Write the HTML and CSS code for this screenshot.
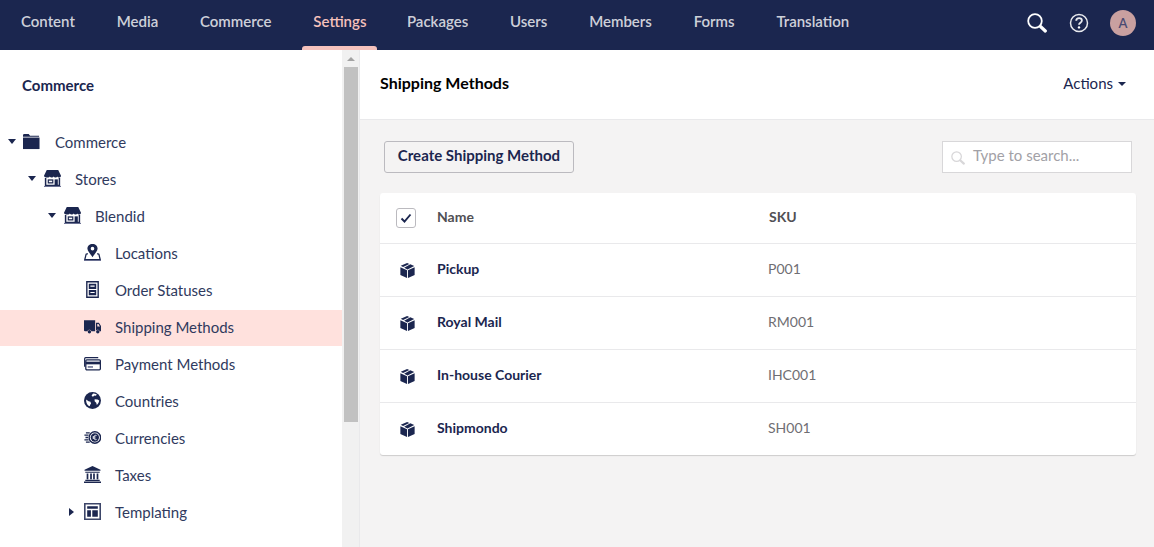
FILE: index.html
```html
<!DOCTYPE html>
<html lang="en">
<head>
<meta charset="utf-8">
<title>Shipping Methods</title>
<link rel="stylesheet" href="styles.css">
</head>
<body>
<svg class="defs" width="0" height="0" aria-hidden="true">
  <symbol id="store" viewBox="0 0 16 16">
    <path fill="#1b264f" d="M2.600 0h10.800L16 5.400c0 1-.8 1.700-1.700 1.700-.8 0-1.500-.4-1.800-1-.3.6-1 1-1.700 1-.8 0-1.500-.4-1.900-1-.2.6-.9 1-1.700 1s-1.400-.4-1.800-1c-.3.6-1 1-1.800 1C.9 7.100 0 6.400 0 5.400z"/>
    <path fill="none" stroke="#1b264f" stroke-width="1.400" d="M1.500 7.500v7h13v-7"/>
    <path fill="#1b264f" d="M3.500 8.800h5.300v3.900H3.500z"/>
    <path fill="#fff" d="M4.600 10h3.100v1.500H4.600z"/>
    <path fill="#1b264f" d="M10 8.800h3v5.700h-3z"/>
    <path fill="#6a7092" d="M0 15h16v1H0z"/>
  </symbol>
  <symbol id="box" viewBox="0 0 16 16">
    <path fill="#1b264f" d="M.4 4.600 7.500 7.800V16L.4 12.800z"/>
    <path fill="#1b264f" d="M15.600 4.600 8.500 7.800V16l7.100-3.200z"/>
    <path fill="#1b264f" d="M7.600 0 9.900 1 3.300 4.200.8 3z"/>
    <path fill="#1b264f" d="M11 1.300 15.200 3.200 8 6.900 4.400 5z"/>
  </symbol>
  <symbol id="lens" viewBox="0 0 20 20">
    <circle cx="8" cy="8" r="6.800" fill="none" stroke="currentColor" stroke-width="1.800"/>
    <path d="M13.500 13.500l4.800 4.500" stroke="currentColor" stroke-width="3.200" stroke-linecap="round"/>
  </symbol>
</svg>

<header class="topbar">
  <nav class="sections">
    <a class="section">Content</a>
    <a class="section">Media</a>
    <a class="section">Commerce</a>
    <a class="section is-active">Settings</a>
    <a class="section">Packages</a>
    <a class="section">Users</a>
    <a class="section">Members</a>
    <a class="section">Forms</a>
    <a class="section">Translation</a>
  </nav>
  <div class="tools">
    <svg class="tool-search"><use href="#lens"/></svg>
    <svg class="tool-help" viewBox="0 0 20 20">
      <circle cx="10" cy="10" r="8.500" fill="none" stroke="#fff" stroke-opacity=".9" stroke-width="1.500"/>
      <path d="M7.200 7.800c0-1.700 1.200-2.700 2.900-2.700 1.600 0 2.800 1 2.800 2.400 0 2.200-2.900 2.100-2.900 4.200" fill="none" stroke="#fff" stroke-opacity=".9" stroke-width="1.800"/>
      <circle cx="10" cy="14.400" r="1.200" fill="#fff"/>
    </svg>
    <div class="avatar">A</div>
  </div>
</header>

<div class="workspace">
  <aside class="sidebar">
    <div class="tree-pane">
      <h2 class="tree-title">Commerce</h2>
      <ul class="tree">
        <li class="node level-0">
          <span class="caret caret-down"></span>
          <svg class="node-icon" viewBox="0 0 18 16"><path fill="#1b264f" d="M0 1.500C0 .7.500 0 1.200 0H6l1.500 1.800H17V3H0z"/><path fill="#1b264f" d="M0 3.800h17.500V16H0z"/></svg>
          <span class="node-label">Commerce</span>
        </li>
        <li class="node level-1">
          <span class="caret caret-down"></span>
          <svg class="node-icon"><use href="#store"/></svg>
          <span class="node-label">Stores</span>
        </li>
        <li class="node level-2">
          <span class="caret caret-down"></span>
          <svg class="node-icon"><use href="#store"/></svg>
          <span class="node-label">Blendid</span>
        </li>
        <li class="node level-3">
          <span class="caret"></span>
          <svg class="node-icon" viewBox="0 0 16 16"><path fill="#1b264f" fill-rule="evenodd" d="M8 0c2.800 0 4.800 1.900 4.800 4.300 0 2.500-3 5.300-4.800 8.100-1.800-2.800-4.800-5.600-4.800-8.100C3.200 1.900 5.200 0 8 0zm0 2.700a1.700 1.700 0 1 0 0 3.400 1.700 1.700 0 0 0 0-3.400z"/><path fill="none" stroke="#1b264f" stroke-width="1.200" d="M3.600 9 2 9.600.7 14.800h14.600L14 9.600 12.400 9"/><path fill="#6a7092" d="M0 15h16v1H0z"/></svg>
          <span class="node-label">Locations</span>
        </li>
        <li class="node level-3">
          <span class="caret"></span>
          <svg class="node-icon" viewBox="0 0 16 16"><path fill="#1b264f" fill-rule="evenodd" d="M2 0h12v16H2zm1.300 1.300v13.400h9.400V1.300z"/><path fill="#1b264f" d="M4.500 2.500h7v5h-7zm0 6h7v5h-7z"/><path fill="#fff" d="M6 4.300h4v1H6zm0 6h4v1H6z"/></svg>
          <span class="node-label">Order Statuses</span>
        </li>
        <li class="node level-3 is-selected">
          <span class="caret"></span>
          <svg class="node-icon" viewBox="0 0 16 16"><path fill="#1b264f" d="M0 2h10.500v10.500H7a2 2 0 0 0-3.800 0H1a1 1 0 0 1-1-1z"/><path fill="#1b264f" fill-rule="evenodd" d="M11.300 4.500H14l2 3v5h-1.300a2 2 0 0 0-3.400-.8zm1.200 1.200v2.300H15l-1.400-2.300z"/><circle cx="5.100" cy="13" r="1.600" fill="#1b264f"/><circle cx="13" cy="13" r="1.600" fill="#1b264f"/></svg>
          <span class="node-label">Shipping Methods</span>
        </li>
        <li class="node level-3">
          <span class="caret"></span>
          <svg class="node-icon" viewBox="0 0 16 16"><path fill="none" stroke="#1b264f" stroke-width="1.100" d="M.6 11V3.500c0-.6.400-1 1-1h11.800"/><rect x="1.700" y="4.500" width="13.700" height="9.500" rx="1" fill="none" stroke="#1b264f" stroke-width="1.200"/><path fill="#1b264f" d="M1.700 6.300H16v2.500H1.700z"/><path fill="#6a7092" d="M3.500 10.500h5v1.500h-5z"/></svg>
          <span class="node-label">Payment Methods</span>
        </li>
        <li class="node level-3">
          <span class="caret"></span>
          <svg class="node-icon" viewBox="0 0 16 16"><circle cx="8" cy="8" r="8" fill="#1b264f"/><path fill="#fff" d="M8.500 1.300c1.300 0 2.600.4 3.600 1.100l-.9 1.200-1.400-.4-.5.9-1.700.1-.4-1zM10 6.900l2.800.2 1.500 1c-.2 1.700-1 3.100-2.200 4.100l-.6-2-1.500-1.400zM2 7l2.300 1.600 1.800.5.500 1.700-.9 1.400-.3 1.300C3.300 12.700 1.800 10.200 2 7z"/></svg>
          <span class="node-label">Countries</span>
        </li>
        <li class="node level-3">
          <span class="caret"></span>
          <svg class="node-icon" viewBox="0 0 16 16"><circle cx="10.200" cy="8" r="5.400" fill="none" stroke="#1b264f" stroke-width="1.300"/><circle cx="10.200" cy="8" r="3.900" fill="#1b264f"/><path d="M11.800 6.200c-1.300-.7-2.600 0-2.600 1.800s1.300 2.500 2.600 1.800M8.100 7.400h2.700M8.100 8.600h2.700" fill="none" stroke="#fff" stroke-width=".85"/><path fill="none" stroke="#1b264f" stroke-width="1.300" d="M5.400 3.600H1.800M4.300 5.800H.4M3.800 8H1.400M4.300 10.200H.4M5.400 12.400H1.800"/></svg>
          <span class="node-label">Currencies</span>
        </li>
        <li class="node level-3">
          <span class="caret"></span>
          <svg class="node-icon" viewBox="0 0 16 16"><path fill="#1b264f" d="M8 0l7.500 3.500v1H.5v-1z"/><path fill="#1b264f" d="M1.200 5.300h13.600v1H1.200zM2.500 7h1.600v5.500H2.500zm3.300 0h1.600v5.500H5.800zm2.800 0h1.600v5.500H8.600zm3.300 0h1.600v5.500h-1.600zM1.200 13h13.600v1H1.200zM0 14.500h16V16H0z"/></svg>
          <span class="node-label">Taxes</span>
        </li>
        <li class="node level-3">
          <span class="caret caret-right"></span>
          <svg class="node-icon" viewBox="0 0 16 16"><path fill="#1b264f" fill-opacity=".85" fill-rule="evenodd" d="M0 0h16v16H0zm1.500 1.500v13h13v-13z"/><path fill="#1b264f" d="M3 3h10v2.500H3zm0 3.800h3.500V13H3zm4.800 0H13V13H7.800z"/></svg>
          <span class="node-label">Templating</span>
        </li>
      </ul>
    </div>
    <div class="scrollbar">
      <span class="scroll-arrow"></span>
      <span class="scroll-thumb"></span>
    </div>
  </aside>

  <main class="content">
    <div class="content-head">
      <h1 class="page-title">Shipping Methods</h1>
      <div class="actions">Actions <span class="actions-caret"></span></div>
    </div>
    <div class="content-body">
      <div class="toolbar">
        <button class="create-btn" type="button">Create Shipping Method</button>
        <div class="search">
          <svg class="search-icon"><use href="#lens"/></svg>
          <span class="search-text">Type to search...</span>
        </div>
      </div>
      <div class="table">
        <div class="row row-head">
          <div class="cell-icon">
            <span class="checkbox">
              <svg viewBox="0 0 12 12" width="12" height="12"><path d="M1.500 6.500 4.500 9.500 10.500 2.500" fill="none" stroke="#1b264f" stroke-width="1.900"/></svg>
            </span>
          </div>
          <div class="cell-name head-label">Name</div>
          <div class="cell-sku head-label">SKU</div>
        </div>
        <div class="row">
          <div class="cell-icon"><svg class="box-icon"><use href="#box"/></svg></div>
          <div class="cell-name">Pickup</div>
          <div class="cell-sku sku-value">P001</div>
        </div>
        <div class="row">
          <div class="cell-icon"><svg class="box-icon"><use href="#box"/></svg></div>
          <div class="cell-name">Royal Mail</div>
          <div class="cell-sku sku-value">RM001</div>
        </div>
        <div class="row">
          <div class="cell-icon"><svg class="box-icon"><use href="#box"/></svg></div>
          <div class="cell-name">In-house Courier</div>
          <div class="cell-sku sku-value">IHC001</div>
        </div>
        <div class="row">
          <div class="cell-icon"><svg class="box-icon"><use href="#box"/></svg></div>
          <div class="cell-name">Shipmondo</div>
          <div class="cell-sku sku-value">SH001</div>
        </div>
      </div>
    </div>
  </main>
</div>
</body>
</html>
```

FILE: styles.css
```css
* { box-sizing: border-box; }
html, body { height: 100%; }
body {
  margin: 0;
  height: 547px;
  overflow: hidden;
  display: flex;
  flex-direction: column;
  font-family: Lato, "Open Sans", sans-serif;
  font-size: 15px;
  color: #1b264f;
  background: #fff;
}
.defs { position: absolute; }

.topbar {
  flex: 0 0 50px;
  height: 50px;
  display: flex;
  justify-content: space-between;
  align-items: stretch;
  background: #1b264f;
}
.sections { display: flex; padding-left: 1px; }
.section {
  position: relative;
  display: flex;
  align-items: center;
  padding: 0 20px 8px;
  margin-right: 1.800px;
  font-size: 15px;
  font-weight: 600;
  color: rgba(255,255,255,.8);
}
.section.is-active { color: #f5c1bc; padding: 0 11px 8px; margin: 0 9.500px 0 9px; }
.section.is-active::after {
  content: "";
  position: absolute;
  left: 0; right: 0; bottom: 0;
  height: 4px;
  background: #f5c1bc;
  border-radius: 3px 3px 0 0;
}
.tools { display: flex; align-items: center; padding-right: 18px; padding-bottom: 4px; }
.tool-search { width: 20px; height: 20px; color: #fff; margin-right: 22px; }
.tool-help { width: 20px; height: 20px; margin-right: 21px; }
.avatar {
  width: 26px; height: 26px;
  border-radius: 50%;
  background: #c9a0a0;
  color: #4a4a72;
  font-size: 13px;
  font-weight: 600;
  display: flex; align-items: center; justify-content: center;
}

.workspace { flex: 1; display: flex; min-height: 0; }
.sidebar {
  flex: 0 0 360px;
  display: flex;
  border-right: 1px solid #e9e9eb;
}
.tree-pane { flex: 0 0 342px; min-width: 0; }
.tree-title {
  margin: 0;
  padding: 26px 0 0 22px;
  height: 75px;
  font-size: 15px;
  line-height: 18px;
  font-weight: 700;
  color: #1b264f;
}
.tree { list-style: none; margin: 0; padding: 0; }
.node {
  height: 37px;
  padding-bottom: 4px;
  display: flex;
  align-items: center;
}
.node-label { color: #303a5e; }
.level-0 { padding-left: 7px; }
.level-1 { padding-left: 27px; }
.level-2 { padding-left: 47px; }
.level-3 { padding-left: 67px; }
.node.is-selected {
  height: 36px;
  padding-bottom: 3px;
  margin-bottom: 1px;
  background: #ffe1dd;
}
.caret { flex: 0 0 10px; width: 10px; height: 10px; margin-right: 6.500px; }
.caret-down {
  width: 0; height: 0; flex: 0 0 0;
  margin-left: 1px;
  margin-right: 7.500px;
  border: 4px solid transparent;
  border-top: 5px solid #1b264f;
  border-bottom: 0;
}
.caret-right {
  width: 0; height: 0; flex: 0 0 0;
  margin-left: 2px;
  margin-right: 9.500px;
  border: 4px solid transparent;
  border-left: 5px solid #1b264f;
  border-right: 0;
}
.node-icon { flex: 0 0 17px; width: 17px; height: 17px; margin-right: 14.500px; }
.level-0 .caret-down { margin-right: 7px; }
.level-0 .node-icon { margin-right: 15px; }

.scrollbar {
  flex: 0 0 17px;
  background: #f1f1f1;
  display: flex;
  flex-direction: column;
  align-items: center;
}
.scroll-arrow {
  margin-top: 7px;
  border: 4px solid transparent;
  border-bottom: 4px solid #a3a3a3;
  border-top: 0;
  height: 0; width: 0;
}
.scroll-thumb { margin-top: 6px; width: 14px; height: 355px; background: #c1c1c1; }

.content { flex: 1; display: flex; flex-direction: column; min-width: 0; background: #f4f3f3; }
.content-head {
  flex: 0 0 70px;
  height: 70px;
  padding: 0 28px 5px 20px;
  display: flex;
  align-items: center;
  justify-content: space-between;
  background: #fff;
  border-bottom: 1px solid #e9e9eb;
}
.page-title { margin: 0; font-size: 16px; font-weight: 700; color: #000; }
.actions { margin-top: 2px; font-size: 15px; color: #1b264f; display: flex; align-items: center; }
.actions-caret {
  margin-left: 5px;
  margin-top: 2px;
  border: 4px solid transparent;
  border-top: 4px solid #1b264f;
  border-bottom: 0;
}
.content-body { flex: 1; padding: 21px 18px 0 20px; }
.toolbar { display: flex; justify-content: space-between; padding: 0 4px; }
.create-btn {
  width: 190px;
  height: 32px;
  border: 1px solid #bbbabf;
  border-radius: 3px;
  background: #f4f3f3;
  font: 700 15px Lato, sans-serif;
  color: #1b264f;
  padding: 0 0 4px;
}
.search {
  width: 190px;
  height: 32px;
  background: #fff;
  border: 1px solid #d8d7d9;
  display: flex;
  align-items: center;
  padding-left: 8px;
}
.search-icon { width: 14px; height: 14px; color: #d8d7d9; margin-right: 8px; margin-top: 2px; }
.search-text { font-size: 15px; color: #a2a1a6; margin-top: -4px; }
.table {
  margin-top: 20px;
  background: #fff;
  border-radius: 3px;
  box-shadow: 0 1px 1px rgba(0,0,0,.16);
}
.row {
  height: 53px;
  display: flex;
  align-items: center;
  border-top: 1px solid #e9e9eb;
  font-size: 14px;
  font-weight: 700;
  color: #1b264f;
}
.row-head { height: 50px; border-top: 0; }
.cell-icon { flex: 0 0 57px; display: flex; justify-content: flex-start; padding-left: 20px; }
.cell-name { flex: 0 0 331px; margin-top: -4px; }
.cell-sku { flex: 1; padding-left: 1px; margin-top: -4px; }
.head-label { color: #515054; }
.sku-value { font-weight: 400; color: #6f6e73; padding-left: 0; }
.checkbox {
  margin-left: -4px;
  width: 20px; height: 20px;
  border: 1px solid #bbbabf;
  border-radius: 3px;
  display: flex; align-items: center; justify-content: center;
  background: #fff;
}
.box-icon { width: 15px; height: 15px; }
```
